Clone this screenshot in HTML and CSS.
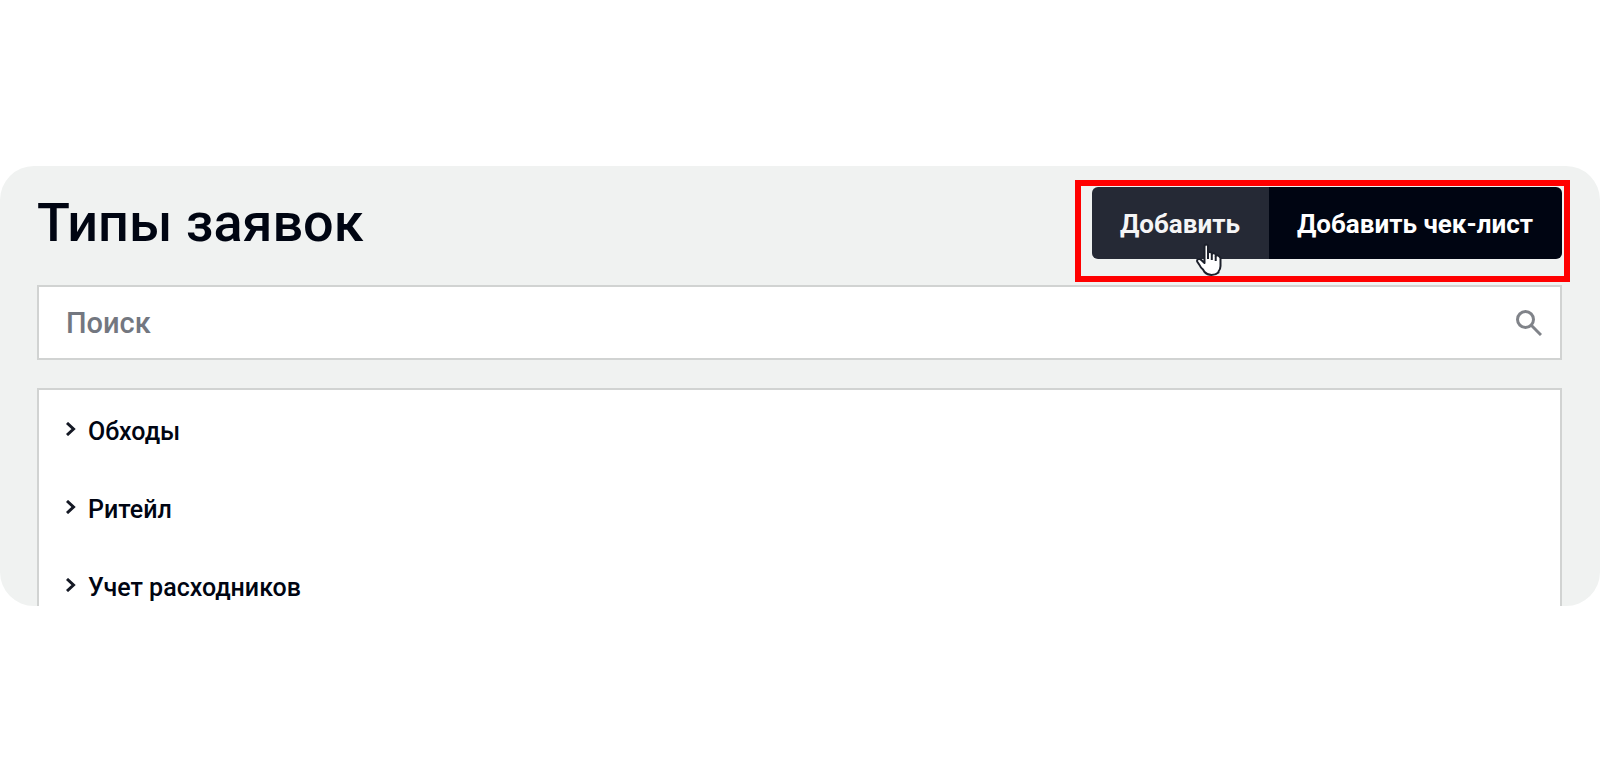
FILE: index.html
```html
<!DOCTYPE html>
<html lang="ru">
<head>
    <meta charset="UTF-8">
    <meta name="viewport" content="width=device-width, initial-scale=1.0">
    <title>Типы заявок</title>
    <link rel="stylesheet" href="styles.css">
</head>
<body>

    <main class="panel">
        <header class="header">
            <h1>Типы заявок</h1>
            <div class="actions">
                <button class="button hovered" type="button">Добавить</button>
                <button class="button" type="button">Добавить чек-лист</button>

                <svg class="cursor" viewBox="0 0 26 33" aria-hidden="true">
                    <path d="M8.500 18.500V3.500Q8.500 1.500 10.200 1.500T12 3.500V10Q12.400 8.800 14 8.900T15.800 10.500V11Q16.400 9.900 18 10.200T19.700 12V13Q20.300 12.200 21.700 12.400T24.500 15V23Q24.500 26 22.500 28.500V29.500Q19.500 32 15.500 32T8.500 29L7 26.500Q4.500 24.500 3.500 22L1.300 18.700Q0.600 17 2.200 16.200T5.300 17L8.500 20Z"/>
                    <path class="fingers" d="M12 10V16M15.800 11V17M19.700 13V18"/>
                </svg>
                <div class="highlight"></div>
            </div>
        </header>

        <form class="search" role="search">
            <input id="search" type="text" placeholder="Поиск" aria-label="Поиск">
            <button class="search-button" type="button" aria-label="Найти">
                <svg viewBox="0 0 26 26" aria-hidden="true">
                    <circle cx="9.500" cy="9.500" r="8"/>
                    <path d="M15.500 15.500L25 25"/>
                </svg>
            </button>
        </form>

        <ul class="list">
            <li>
                <button class="item" type="button">
                    <svg class="arrow" viewBox="0 0 10 14" aria-hidden="true"><path d="M1 1L7.500 7L1 13"/></svg>
                    Обходы
                </button>
            </li>
            <li>
                <button class="item" type="button">
                    <svg class="arrow" viewBox="0 0 10 14" aria-hidden="true"><path d="M1 1L7.500 7L1 13"/></svg>
                    Ритейл
                </button>
            </li>
            <li>
                <button class="item" type="button">
                    <svg class="arrow" viewBox="0 0 10 14" aria-hidden="true"><path d="M1 1L7.500 7L1 13"/></svg>
                    Учет расходников
                </button>
            </li>
        </ul>
    </main>

</body>
</html>
```

FILE: styles.css
```css
* {
    box-sizing: border-box;
}

body {
    font-family: Roboto, "Liberation Sans", sans-serif;
    display: flex;
    align-items: center;
    min-height: 100vh;
    margin: 0;
    background-color: #fff;
    color: #000512;
}

button,
input {
    font-family: inherit;
    font-size: 26px;
}

button {
    border: none;
    cursor: pointer;
}

.panel {
    flex: 1;
    min-width: 0;
    padding: 21px 38px 0 37px;
    background-color: #f0f2f1;
    border-radius: 34px;
    overflow: hidden;
}

.header {
    display: flex;
    justify-content: space-between;
    align-items: center;
    margin-bottom: 26px;
}

h1 {
    margin: 0;
    font-size: 54px;
    font-weight: 500;
    line-height: 64px;
}

.actions {
    position: relative;
    display: flex;
}

.button {
    height: 72px;
    padding: 2px 29px 0 28px;
    background-color: #000512;
    color: #fff;
    font-weight: 700;
}

.button:first-child {
    border-radius: 6px 0 0 6px;
}

.button:nth-child(2) {
    border-radius: 0 6px 6px 0;
}

.button.hovered,
.button:hover {
    background-color: #252935;
    color: #f5f5f6;
}

.cursor {
    position: absolute;
    top: 56px;
    left: 104px;
    width: 26px;
    height: 33px;
    fill: #fff;
    stroke: #1c202b;
    stroke-width: 2;
    stroke-linejoin: round;
    pointer-events: none;
}

.cursor .fingers {
    fill: none;
}

/* red frame around the buttons */
.highlight {
    position: absolute;
    top: -7px;
    right: -8px;
    bottom: -23px;
    left: -17px;
    border: 6px solid #f00;
    pointer-events: none;
}

.search {
    display: flex;
    height: 75px;
    margin-bottom: 28px;
    background-color: #fff;
    border: 2px solid #d1d3d2;
}

.search input {
    flex: 1;
    min-width: 0;
    padding: 0 27px;
    background: none;
    border: none;
    outline: none;
    font-size: 29px;
    font-weight: 500;
    color: #000512;
}

.search input::placeholder {
    color: #737780;
    opacity: 1;
}

.search-button {
    display: flex;
    align-items: center;
    padding: 0 18px;
    background: none;
}

.search-button svg {
    width: 26px;
    height: 26px;
    fill: none;
    stroke: #808389;
    stroke-width: 3;
}

.list {
    display: flex;
    flex-direction: column;
    gap: 42px;
    margin: 0;
    padding: 24px 27px 0;
    list-style: none;
    background-color: #fff;
    border: 2px solid #d1d3d2;
    border-bottom: none;
}

.list li {
    display: flex;
}

.item {
    display: flex;
    gap: 12px;
    padding: 0;
    background: none;
    color: #000512;
    font-size: 25px;
    font-weight: 500;
    line-height: 36px;
}

.arrow {
    width: 10px;
    height: 14px;
    margin-top: 8px;
    fill: none;
    stroke: #151925;
    stroke-width: 3;
}
```
